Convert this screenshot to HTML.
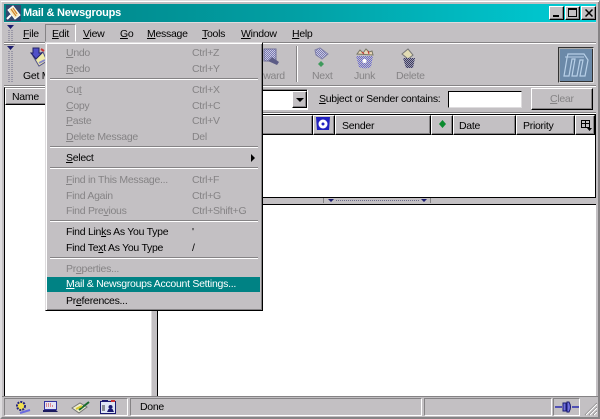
<!DOCTYPE html>
<html><head><meta charset="utf-8"><style>
html,body{margin:0;padding:0}
body{width:600px;height:419px;overflow:hidden;background:#c3c0c3;position:relative;font-family:"Liberation Sans",sans-serif;font-size:11px;color:#000}
.a{position:absolute}
.t{position:absolute;white-space:nowrap;line-height:13px;height:13px;margin-top:1px}
.d{color:#858385}
u{text-decoration:underline}
.hl{position:absolute;height:1px}
.btn{position:absolute;background:#c3c0c3;border:1px solid;border-color:#fff #000 #000 #fff;box-sizing:border-box;box-shadow:inset -1px -1px 0 #858385}
.sunk{position:absolute;box-sizing:border-box;border:1px solid;border-color:#858385 #fff #fff #858385}
.hd{position:absolute;top:115px;height:20px;box-sizing:border-box;background:#c3c0c3;border:1px solid;border-color:#fff #000 #000 #fff;box-shadow:inset -1px -1px 0 #858385}
.s{font-size:10.5px;letter-spacing:-.28px}
</style></head><body>
<svg class="a" width="0" height="0" style="left:0;top:0"><defs>
<pattern id="dl" width="2" height="2" patternUnits="userSpaceOnUse"><rect width="2" height="2" fill="#c3c0c3"/><rect width="1" height="1" fill="#6a6ad0"/><rect x="1" y="1" width="1" height="1" fill="#6a6ad0"/></pattern>
<pattern id="dg" width="2" height="2" patternUnits="userSpaceOnUse"><rect width="2" height="2" fill="#9c9ab4"/><rect width="1" height="1" fill="#3c3c5c"/><rect x="1" y="1" width="1" height="1" fill="#3c3c5c"/></pattern>
<pattern id="db" width="2" height="2" patternUnits="userSpaceOnUse"><rect width="2" height="2" fill="#c8c8e4"/><rect width="1" height="1" fill="#7a7ab0"/><rect x="1" y="1" width="1" height="1" fill="#7a7ab0"/></pattern>
</defs></svg>
<div class="a" style="left:0;top:0;width:600px;height:419px;box-sizing:border-box;border:2px solid;border-color:#dedcde #858385 #858385 #dedcde"></div>
<div class="a" style="left:1px;top:1px;width:598px;height:1px;background:#fff"></div>
<div class="a" style="left:4px;top:4px;width:592px;height:18px;background:linear-gradient(90deg,#008284 0%,#02a0a5 50%,#00cdd6 100%)"></div>
<svg class="a" style="left:5px;top:4px" width="17" height="18" viewBox="0 0 17 18"><rect x="1" y="1" width="15" height="16" fill="#34476e"/><path d="M3 6L8 2L15 11L10 15Z" fill="#f5e8c0" stroke="#fff"/><path d="M6 5l5 7M8 4l4 6" stroke="#d2842a" stroke-width="1.2"/><path d="M2 15l4-4" stroke="#fff" stroke-width="2"/></svg>
<div class="t" style="left:23px;top:6px;color:#fff;font-weight:bold;font-size:11px;letter-spacing:-.2px">Mail &amp; Newsgroups</div>
<div class="btn" style="left:549px;top:6px;width:15px;height:14px"><div class="a" style="left:3px;top:8px;width:6px;height:2px;background:#000"></div></div>
<div class="btn" style="left:565px;top:6px;width:15px;height:14px"><div class="a" style="left:2px;top:1px;width:9px;height:9px;box-sizing:border-box;border:1px solid #000;border-top-width:2px"></div></div>
<div class="btn" style="left:581px;top:6px;width:15px;height:14px"><svg class="a" style="left:3px;top:2px" width="8" height="8"><path d="M0.5 0.5L7.5 7.5M7.5 0.5L0.5 7.5" stroke="#000" stroke-width="1.5"/></svg></div>

<!-- menu bar -->
<div class="hl" style="left:4px;top:22px;width:592px;background:#dedcde"></div>
<div class="hl" style="left:4px;top:42px;width:592px;background:#858385"></div>
<div class="hl" style="left:4px;top:43px;width:592px;background:#fff"></div>
<div class="hl" style="left:4px;top:85px;width:592px;background:#858385"></div>
<div class="hl" style="left:4px;top:86px;width:592px;background:#fff"></div>
<div class="hl" style="left:160px;top:112px;width:436px;background:#858385"></div>
<div class="hl" style="left:160px;top:113px;width:436px;background:#fff"></div>
<svg class="a" style="left:5px;top:23px" width="9" height="62"><path d="M2 2h7L5.500 6z" fill="#1a1a6e"/><path d="M2 23h7L5.500 27z" fill="#1a1a6e"/><path d="M4 7v11M7 7v11M4 28v32M7 28v32" stroke="#6d6b8a" stroke-dasharray="1 1"/></svg>
<div class="hl" style="left:4px;top:44px;width:11px;background:#858385"></div>
<div class="t s" style="left:23px;top:27px"><u>F</u>ile</div>
<div class="a" style="left:45px;top:24px;width:31px;height:18px;box-sizing:border-box;border:1px solid;border-color:#858385 #fff transparent #858385"></div>
<div class="t s" style="left:52px;top:27px"><u>E</u>dit</div>
<div class="t s" style="left:83px;top:27px"><u>V</u>iew</div>
<div class="t s" style="left:120px;top:27px"><u>G</u>o</div>
<div class="t s" style="left:147px;top:27px"><u>M</u>essage</div>
<div class="t s" style="left:202px;top:27px"><u>T</u>ools</div>
<div class="t s" style="left:241px;top:27px"><u>W</u>indow</div>
<div class="t s" style="left:292px;top:27px"><u>H</u>elp</div>

<!-- toolbar -->
<svg class="a" style="left:30px;top:47px" width="18" height="20"><path d="M3 9l10-4 4 9-8 5z" fill="#eeeaa8" stroke="#55558a"/><path d="M3 1h6v5h3l-6 6-5-6h2z" fill="#5050c8" stroke="#222266"/><path d="M11 2l3 2" stroke="#c33" stroke-width="2"/><path d="M9 16l6-3" stroke="#8888cc" stroke-width="2"/></svg>
<div class="t s" style="left:23px;top:69px">Get M</div>
<div class="t d s" style="left:260px;top:69px">rward</div>
<svg class="a" style="left:262px;top:47px" width="18" height="20"><path d="M2 2h12v12H2z" fill="url(#db)" stroke="#70709a"/><path d="M6 14l9 4 2-3-7-5z" fill="#5c5c86"/></svg>
<div class="a" style="left:296px;top:46px;width:1px;height:36px;background:#858385"></div><div class="a" style="left:297px;top:46px;width:1px;height:36px;background:#fff"></div>
<svg class="a" style="left:313px;top:47px" width="16" height="21"><path d="M2 3l5-2 8 6-6 5-6-4z" fill="url(#db)" stroke="#8080a8"/><path d="M8 14l3 3-3 3-3-3z" fill="#3f9a5c"/></svg>
<div class="t d s" style="left:312px;top:69px">Next</div>
<svg class="a" style="left:354px;top:47px" width="22" height="23"><path d="M2 9h17l-2 11q-6 3-12 0z" fill="url(#dl)"/><circle cx="10.500" cy="14" r="5" fill="url(#dl)"/><circle cx="10.500" cy="14" r="2" fill="#fff"/><path d="M3 7l3-4 3 3 3-4 3 3 3-1 1 4z" fill="#ead8b8" stroke="#776"/><path d="M8 5l2 2M14 4l1 3" stroke="#c33"/></svg>
<div class="t d s" style="left:354px;top:69px">Junk</div>
<svg class="a" style="left:400px;top:48px" width="18" height="21"><path d="M2 6l6-5 5 6-5 4z" fill="#e2dcb4" stroke="#777"/><path d="M3 10h12l-2 10H6z" fill="url(#dg)"/></svg>
<div class="t d s" style="left:396px;top:69px">Delete</div>
<div class="a" style="left:558px;top:47px;width:36px;height:36px;box-sizing:border-box;background:#6b89a8;border:1px solid;border-color:#333 #dedcde #dedcde #333;box-shadow:inset 1px 1px 0 #aaa,inset -1px -1px 0 #333"></div>
<svg class="a" style="left:562px;top:52px" width="28" height="26"><path d="M6 2H22L26 8L23 24H18L21 8H18L15 24H10L13 7H10L7 24H2L5 6z" fill="none" stroke="#b8d0e8" stroke-width="1.2"/><path d="M3 5H22" stroke="#b8d0e8"/></svg>

<!-- search row -->
<div class="a" style="left:160px;top:89px;width:148px;height:21px;background:#fff;box-sizing:border-box;border:1px solid;border-color:#858385 #fff #fff #858385;box-shadow:inset 1px 1px 0 #000"></div>
<div class="btn" style="left:292px;top:91px;width:15px;height:17px"><div class="a" style="left:3px;top:6px;border:4px solid transparent;border-top:4px solid #000;border-bottom:0"></div></div>
<div class="t s" style="left:319px;top:92px"><u>S</u>ubject or Sender contains:</div>
<div class="a" style="left:448px;top:91px;width:74px;height:17px;background:#fff;box-sizing:border-box;border:1px solid;border-color:#000 #dedcde #dedcde #000"></div>
<div class="btn" style="left:531px;top:88px;width:62px;height:22px"><div class="t d s" style="left:18px;top:3px"><u>C</u>lear</div></div>

<!-- left pane -->
<div class="a" style="left:4px;top:87px;width:148px;height:310px;background:#fff;box-sizing:border-box;border:1px solid;border-color:#858385 #dedcde #dedcde #000"></div>
<div class="hd" style="left:5px;top:88px;width:146px;height:17px"></div>
<div class="t s" style="left:12px;top:90px">Name</div>
<!-- right panes -->
<div class="a" style="left:157px;top:114px;width:439px;height:84px;background:#fff;box-sizing:border-box;border:1px solid #000"></div>
<div class="hd" style="left:158px;width:155px"></div>
<div class="hd" style="left:313px;width:22px"></div>
<svg class="a" style="left:315px;top:116px" width="17" height="16"><path d="M1 1h14l-1 13H2z" fill="#2222c0"/><circle cx="8" cy="8" r="4.500" fill="#fff"/><circle cx="8" cy="8" r="1.500" fill="#2222c0"/></svg>
<div class="hd" style="left:335px;width:96px"></div>
<div class="t s" style="left:342px;top:119px">Sender</div>
<div class="hd" style="left:431px;width:22px"></div>
<svg class="a" style="left:438px;top:120px" width="9" height="9"><path d="M4.500 0L8 4L4.500 8L1 4z" fill="#0a8a2e"/></svg>
<div class="hd" style="left:453px;width:63px"></div>
<div class="t s" style="left:459px;top:119px">Date</div>
<div class="hd" style="left:516px;width:59px"></div>
<div class="t s" style="left:523px;top:119px">Priority</div>
<div class="hd" style="left:575px;width:20px"></div>
<svg class="a" style="left:581px;top:120px" width="11" height="11"><path d="M0.500 0.500h8v7h-8zM0.500 3.500h8M4.500 .5v7" fill="none" stroke="#000"/><path d="M6 8h5l-2.500 3z" fill="#000"/></svg>
<svg class="a" style="left:323px;top:198px" width="108" height="6"><path d="M.5 0v5M107.500 0v5" stroke="#858385"/><path d="M5 1h6l-3 3zM98 1h6l-3 3z" fill="#1a1a6e"/><path d="M13 2.500h83" stroke="#6d6b8a" stroke-dasharray="1 1"/></svg>
<div class="a" style="left:157px;top:204px;width:439px;height:193px;background:#fff;border-left:1px solid #000;border-top:1px solid #000;box-sizing:border-box"></div>

<!-- status bar -->
<div class="a" style="left:2px;top:397px;width:596px;height:20px;background:#c3c0c3"></div>
<div class="hl" style="left:2px;top:396px;width:596px;background:#858385"></div>
<div class="sunk" style="left:4px;top:398px;width:124px;height:18px"></div>
<div class="sunk" style="left:130px;top:398px;width:292px;height:18px"></div>
<div class="sunk" style="left:424px;top:398px;width:128px;height:18px"></div>
<div class="sunk" style="left:553px;top:398px;width:27px;height:18px"></div>
<svg class="a" style="left:12px;top:400px" width="20" height="14"><circle cx="9" cy="6" r="4" fill="#f0e050" stroke="#222280" stroke-dasharray="2 1" stroke-width="2"/><path d="M8 13l10-3" stroke="#6a6ae0" stroke-width="2"/></svg>
<svg class="a" style="left:42px;top:400px" width="18" height="14"><rect x="2.500" y="1.500" width="12" height="8" fill="#e4e4f4" stroke="#3232a0"/><path d="M4 4h5M4 6h7" stroke="#d03030" stroke-dasharray="1 1"/><path d="M1 10h13l2 2H1z" fill="#1a1a5e"/></svg>
<svg class="a" style="left:71px;top:401px" width="20" height="13"><path d="M1 7l8-5 7 4-8 6z" fill="#f0f0d0" stroke="#777"/><path d="M8 9l10-8" stroke="#1a6a2e" stroke-width="2"/><path d="M5 8l6-3" stroke="#d8c830" stroke-width="2"/></svg>
<svg class="a" style="left:100px;top:400px" width="17" height="14"><rect x=".5" y="1.500" width="15" height="12" fill="#dfe6f4" stroke="#1a1a70"/><path d="M2 1h6" stroke="#1a1a70" stroke-width="2"/><path d="M11 1h4" stroke="#c33" stroke-width="2"/><circle cx="10.500" cy="7" r="2" fill="#1a1a70"/><path d="M7 12l1.500-3h4l1.500 3z" fill="#1a1a70"/><path d="M2 6h3M2 8h3M2 10h3" stroke="#333"/></svg>
<div class="t s" style="left:140px;top:400px">Done</div>
<svg class="a" style="left:554px;top:400px" width="26" height="14"><path d="M1 7h7M18 7h7" stroke="#2a2ab0" stroke-width="1.500"/><path d="M9 3h3v8H9zM13 2h2q3 5 0 10h-2z" fill="#7070e0" stroke="#1a1a70"/></svg>
<svg class="a" style="left:584px;top:402px" width="13" height="14"><path d="M1 13L13 1M5 13L13 5M9 13L13 9" stroke="#858385"/><path d="M2 13L13 2M6 13L13 6M10 13L13 10" stroke="#fff"/></svg>

<!-- Edit menu -->
<div class="a" style="left:45px;top:42px;width:218px;height:269px;background:#c3c0c3;box-sizing:border-box;border:1px solid;border-color:#dedcde #000 #000 #dedcde;box-shadow:inset 1px 1px 0 #fff,inset -1px -1px 0 #858385"></div>
<div class="t d s" style="left:66px;top:46px"><u>U</u>ndo</div><div class="t d s" style="left:192px;top:46px">Ctrl+Z</div>
<div class="t d s" style="left:66px;top:62px"><u>R</u>edo</div><div class="t d s" style="left:192px;top:62px">Ctrl+Y</div>
<div class="hl" style="left:50px;top:78px;width:208px;background:#858385"></div><div class="hl" style="left:50px;top:79px;width:208px;background:#fff"></div>
<div class="t d s" style="left:66px;top:83px">Cu<u>t</u></div><div class="t d s" style="left:192px;top:83px">Ctrl+X</div>
<div class="t d s" style="left:66px;top:99px"><u>C</u>opy</div><div class="t d s" style="left:192px;top:99px">Ctrl+C</div>
<div class="t d s" style="left:66px;top:114px"><u>P</u>aste</div><div class="t d s" style="left:192px;top:114px">Ctrl+V</div>
<div class="t d s" style="left:66px;top:130px"><u>D</u>elete Message</div><div class="t d s" style="left:192px;top:130px">Del</div>
<div class="hl" style="left:50px;top:146px;width:208px;background:#858385"></div><div class="hl" style="left:50px;top:147px;width:208px;background:#fff"></div>
<div class="t s" style="left:66px;top:151px"><u>S</u>elect</div>
<div class="a" style="left:251px;top:154px;border:4px solid transparent;border-left:4px solid #000;border-right:0"></div>
<div class="hl" style="left:50px;top:167px;width:208px;background:#858385"></div><div class="hl" style="left:50px;top:168px;width:208px;background:#fff"></div>
<div class="t d s" style="left:66px;top:173px"><u>F</u>ind in This Message...</div><div class="t d s" style="left:192px;top:173px">Ctrl+F</div>
<div class="t d s" style="left:66px;top:189px">Find A<u>g</u>ain</div><div class="t d s" style="left:192px;top:189px">Ctrl+G</div>
<div class="t d s" style="left:66px;top:204px">Find Pre<u>v</u>ious</div><div class="t d s" style="left:192px;top:204px">Ctrl+Shift+G</div>
<div class="hl" style="left:50px;top:220px;width:208px;background:#858385"></div><div class="hl" style="left:50px;top:221px;width:208px;background:#fff"></div>
<div class="t s" style="left:66px;top:225px">Find Lin<u>k</u>s As You Type</div><div class="t s" style="left:192px;top:225px">'</div>
<div class="t s" style="left:66px;top:241px">Find Te<u>x</u>t As You Type</div><div class="t s" style="left:192px;top:241px">/</div>
<div class="hl" style="left:50px;top:257px;width:208px;background:#858385"></div><div class="hl" style="left:50px;top:258px;width:208px;background:#fff"></div>
<div class="t d s" style="left:66px;top:262px">Pr<u>o</u>perties...</div>
<div class="a" style="left:47px;top:277px;width:213px;height:15px;background:#008284"></div>
<div class="t s" style="left:66px;top:277px;color:#fff"><u>M</u>ail &amp; Newsgroups Account Settings...</div>
<div class="t s" style="left:66px;top:294px">Pr<u>e</u>ferences...</div>
</body></html>
